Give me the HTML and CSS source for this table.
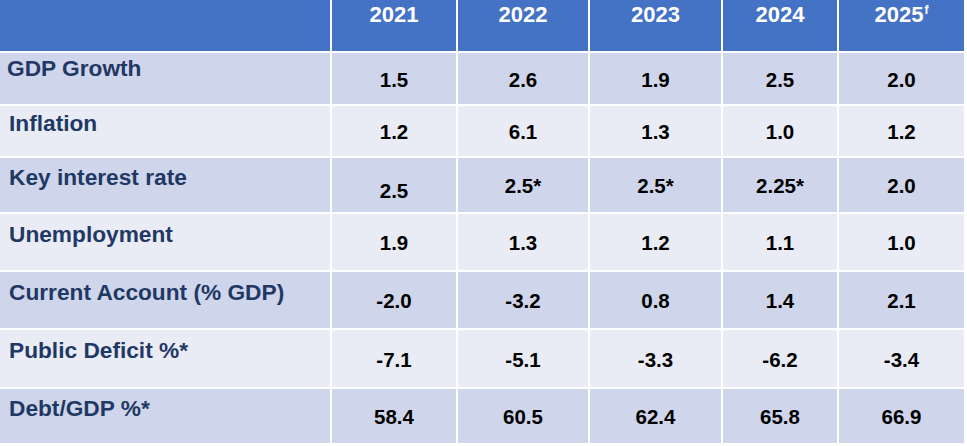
FILE: index.html
```html
<!DOCTYPE html>
<html lang="en">
<head>
<meta charset="utf-8">
<title>Economic indicators</title>
<link rel="stylesheet" href="styles.css">
</head>
<body>
<div class="table">
  <div class="cell head"></div>
  <div class="cell head">2021</div>
  <div class="cell head">2022</div>
  <div class="cell head">2023</div>
  <div class="cell head">2024</div>
  <div class="cell head">2025<sup class="sup">f</sup></div>

  <div class="cell label dark first">GDP Growth</div>
  <div class="cell value dark">1.5</div>
  <div class="cell value dark">2.6</div>
  <div class="cell value dark">1.9</div>
  <div class="cell value dark">2.5</div>
  <div class="cell value dark">2.0</div>

  <div class="cell label light">Inflation</div>
  <div class="cell value light">1.2</div>
  <div class="cell value light">6.1</div>
  <div class="cell value light">1.3</div>
  <div class="cell value light">1.0</div>
  <div class="cell value light">1.2</div>

  <div class="cell label dark">Key interest rate</div>
  <div class="cell value dark low">2.5</div>
  <div class="cell value dark">2.5*</div>
  <div class="cell value dark">2.5*</div>
  <div class="cell value dark">2.25*</div>
  <div class="cell value dark">2.0</div>

  <div class="cell label light">Unemployment</div>
  <div class="cell value light">1.9</div>
  <div class="cell value light">1.3</div>
  <div class="cell value light">1.2</div>
  <div class="cell value light">1.1</div>
  <div class="cell value light">1.0</div>

  <div class="cell label dark">Current Account (% GDP)</div>
  <div class="cell value dark">-2.0</div>
  <div class="cell value dark">-3.2</div>
  <div class="cell value dark">0.8</div>
  <div class="cell value dark">1.4</div>
  <div class="cell value dark">2.1</div>

  <div class="cell label light">Public Deficit %*</div>
  <div class="cell value light">-7.1</div>
  <div class="cell value light">-5.1</div>
  <div class="cell value light">-3.3</div>
  <div class="cell value light">-6.2</div>
  <div class="cell value light">-3.4</div>

  <div class="cell label dark">Debt/GDP %*</div>
  <div class="cell value dark">58.4</div>
  <div class="cell value dark">60.5</div>
  <div class="cell value dark">62.4</div>
  <div class="cell value dark">65.8</div>
  <div class="cell value dark">66.9</div>
</div>
</body>
</html>
```

FILE: styles.css
```css
html, body {
  margin: 0;
  padding: 0;
  background: #ffffff;
}

body {
  font-family: "Liberation Sans", Arial, sans-serif;
  font-weight: bold;
}

.table {
  display: grid;
  grid-template-columns: 330px 124px 130px 131px 114px 125px;
  grid-template-rows: 51px 51px 50px 54px 56px 56px 57px 54px;
  gap: 2px;
  width: max-content;
  background: #ffffff;
}

.cell {
  display: flex;
  align-items: center;
  box-sizing: border-box;
}

.head {
  background: #4472c4;
  color: #ffffff;
  font-size: 22px;
  line-height: 26px;
  justify-content: center;
  padding-bottom: 21px;
}

.sup {
  font-size: 12px;
  line-height: 12px;
  align-self: flex-start;
  margin-top: 4px;
  margin-left: 1px;
  vertical-align: top;
}

.dark {
  background: #cfd5ea;
}

.light {
  background: #e9ebf5;
}

.label {
  color: #1f3864;
  font-size: 22.7px;
  line-height: 26px;
  padding: 0 0 17px 9px;
  white-space: nowrap;
}

.label.first {
  padding-bottom: 22px;
  padding-left: 7px;
}

.value {
  color: #000000;
  font-size: 20.5px;
  line-height: 24px;
  justify-content: center;
  padding-top: 2px;
}

.value.low {
  padding-top: 12px;
}
```
